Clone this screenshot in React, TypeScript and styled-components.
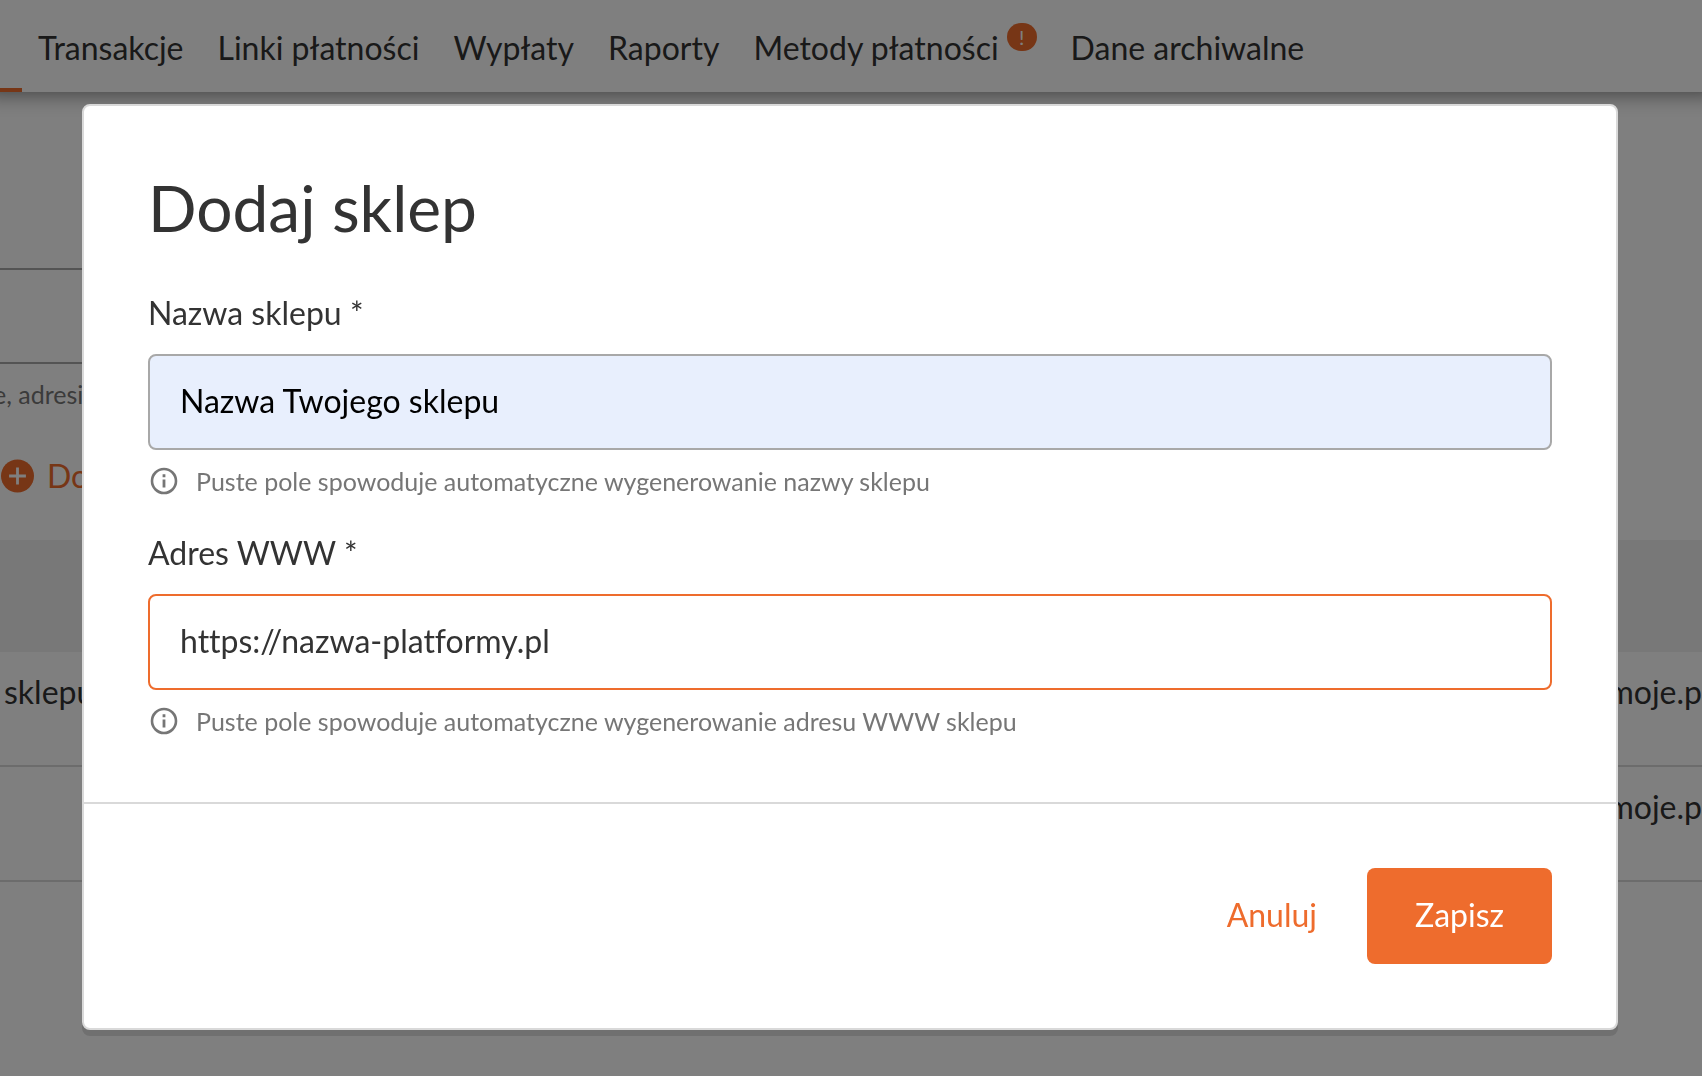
import React from "react";
import styled, { createGlobalStyle } from "styled-components";

const font = '"Lato", "Open Sans", sans-serif';
const orange = "#ee6c2d";

const GlobalStyle = createGlobalStyle`
  *, *::before, *::after { box-sizing: border-box; }
  body { margin: 0; background: #fff; color: #333; font-family: ${font}; font-size: 32px; line-height: 40px; font-variant-ligatures: none; overflow: hidden; }
  input, button { font: inherit; font-variant-ligatures: none; }
`;

const Page = styled.div`
  min-height: 100vh;
  overflow: hidden;
`;

const Header = styled.header`
  position: relative;
  display: flex;
  height: 92px;
  background: #fff;
  box-shadow: 0 -14px 20px 16px rgba(0, 0, 0, 0.5);
`;

const ActiveTab = styled.span`
  width: 22px;
  border-bottom: 4px solid ${orange};
`;

const Nav = styled.nav`
  display: flex;
  align-items: center;
  gap: 34px;
  padding: 4px 16px 0;
`;

const NavLink = styled.a`
  display: flex;
  gap: 8px;
  color: inherit;
  text-decoration: none;
  white-space: nowrap;
`;

const Badge = styled.span`
  width: 30px;
  height: 28px;
  margin-top: -5px;
  border-radius: 14px;
  background: ${orange};
  color: #fff;
  font-size: 20px;
  line-height: 28px;
  text-align: center;
`;

const Filters = styled.section`
  display: flex;
  flex-direction: column;
  padding-top: 176px;
  height: 448px;
`;

const SearchBox = styled.input`
  width: 50%;
  height: 96px;
  border: 2px solid #a8a8a8;
  border-left: 0;
  background: #fff;
`;

const SearchNote = styled.p`
  margin: 14px 0 0;
  color: #767676;
  font-size: 25px;
  line-height: 32px;
  text-indent: -7px;
`;

const AddLink = styled.button`
  display: flex;
  align-items: center;
  gap: 12px;
  margin-top: 46px;
  padding: 0;
  border: 0;
  background: none;
  color: ${orange};
`;

const StoreTable = styled.table`
  width: 100%;
  border-spacing: 0;
  text-align: left;
`;

const HeadRow = styled.tr`
  height: 112px;
  background: #f0f0f0;
`;

const StoreRow = styled.tr`
  height: 115px;
`;

const StoreCell = styled.td<{ $end?: boolean }>`
  padding: 20px 0 0 4px;
  border-bottom: 2px solid #d9d9d9;
  vertical-align: top;
  text-align: ${(p) => (p.$end ? "right" : "left")};
`;

const Overlay = styled.div`
  position: fixed;
  inset: 0;
  padding: 104px 84px 0 82px;
  background: rgba(0, 0, 0, 0.5);
`;

const Dialog = styled.form`
  border: 2px solid #d9d9d9;
  border-radius: 8px;
  background: #fff;
  box-shadow: 0 6px 0 rgba(0, 0, 0, 0.12);
`;

const DialogBody = styled.div`
  display: flex;
  flex-direction: column;
  padding: 62px 64px 65px;
`;

const Title = styled.h1`
  margin: 0 0 40px;
  font-size: 64px;
  font-weight: 400;
  line-height: 80px;
`;

const Field = styled.div`
  display: flex;
  flex-direction: column;
  height: 240px;

  &:last-child { height: auto; }
`;

const Label = styled.label`
  padding: 5px 0 21px;
`;

const TextInput = styled.input<{ $filled?: boolean }>`
  width: 100%;
  height: 96px;
  padding: 0 30px 3px;
  border: 2px solid ${(p) => (p.$filled ? "#a8a8a8" : orange)};
  border-radius: 8px;
  outline: none;
  background: ${(p) => (p.$filled ? "#e8effd" : "#fff")};
  color: ${(p) => (p.$filled ? "#000" : "#333")};
`;

const Hint = styled.p`
  display: flex;
  align-items: center;
  gap: 16px;
  margin: 15px 0 0;
  color: #767676;
  font-size: 25px;
  line-height: 32px;
`;

const DialogFooter = styled.footer`
  display: flex;
  justify-content: flex-end;
  gap: 2px;
  padding: 64px;
  border-top: 2px solid #d9d9d9;
`;

const Action = styled.button<{ $primary?: boolean }>`
  height: 96px;
  padding: 0 48px 3px;
  border: 0;
  border-radius: 8px;
  background: ${(p) => (p.$primary ? orange : "transparent")};
  color: ${(p) => (p.$primary ? "#fff" : orange)};
`;

const InfoIcon = () => (
  <svg width="32" height="32" viewBox="0 0 32 32" aria-hidden="true">
    <circle cx="16" cy="16" r="12" fill="none" stroke="#767676" strokeWidth="2.6" />
    <path d="M16 9.2v3M16 14.4v8" stroke="#767676" strokeWidth="2.8" />
  </svg>
);

const PlusIcon = () => (
  <svg width="35" height="34" viewBox="0 0 35 34" aria-hidden="true">
    <circle cx="17.5" cy="17" r="16.5" fill={orange} />
    <path d="M17.5 8.6v16.8M9.1 17h16.8" stroke="#fff" strokeWidth="2.8" />
  </svg>
);

const links = [
  { text: "Transakcje" },
  { text: "Linki płatności" },
  { text: "Wypłaty" },
  { text: "Raporty" },
  { text: "Metody płatności", alert: true },
  { text: "Dane archiwalne" },
];

const stores = [
  { name: "sklepu", address: "moje.p" },
  { name: "", address: "moje.p" },
];

type FormFieldProps = { id: string; label: string; value: string; hint: string; filled?: boolean };

const FormField = ({ id, label, value, hint, filled }: FormFieldProps) => (
  <Field>
    <Label htmlFor={id}>{label} *</Label>
    <TextInput id={id} type="text" defaultValue={value} $filled={filled} />
    <Hint>
      <InfoIcon />
      {hint}
    </Hint>
  </Field>
);

export default function App() {
  return (
    <>
      <GlobalStyle />
      <Page>
        <Header>
          <ActiveTab />
          <Nav>
            {links.map((link) => (
              <NavLink href="#" key={link.text}>
                {link.text}
                {link.alert && <Badge>!</Badge>}
              </NavLink>
            ))}
          </Nav>
        </Header>
        <main>
          <Filters>
            <SearchBox type="text" aria-labelledby="search-note" />
            <SearchNote id="search-note">e, adresi</SearchNote>
            <AddLink type="button">
              <PlusIcon />
              Do
            </AddLink>
          </Filters>
          <StoreTable>
            <thead>
              <HeadRow>
                <th />
                <th />
              </HeadRow>
            </thead>
            <tbody>
              {stores.map((store, index) => (
                <StoreRow key={index}>
                  <StoreCell>{store.name}</StoreCell>
                  <StoreCell $end>{store.address}</StoreCell>
                </StoreRow>
              ))}
            </tbody>
          </StoreTable>
        </main>
      </Page>
      <Overlay>
        <Dialog role="dialog" aria-labelledby="dialog-title">
          <DialogBody>
            <Title id="dialog-title">Dodaj sklep</Title>
            <FormField
              id="store-name"
              label="Nazwa sklepu"
              value="Nazwa Twojego sklepu"
              hint="Puste pole spowoduje automatyczne wygenerowanie nazwy sklepu"
              filled
            />
            <FormField
              id="store-address"
              label="Adres WWW"
              value="https://nazwa-platformy.pl"
              hint="Puste pole spowoduje automatyczne wygenerowanie adresu WWW sklepu"
            />
          </DialogBody>
          <DialogFooter>
            <Action type="button">Anuluj</Action>
            <Action type="submit" $primary>
              Zapisz
            </Action>
          </DialogFooter>
        </Dialog>
      </Overlay>
    </>
  );
}
